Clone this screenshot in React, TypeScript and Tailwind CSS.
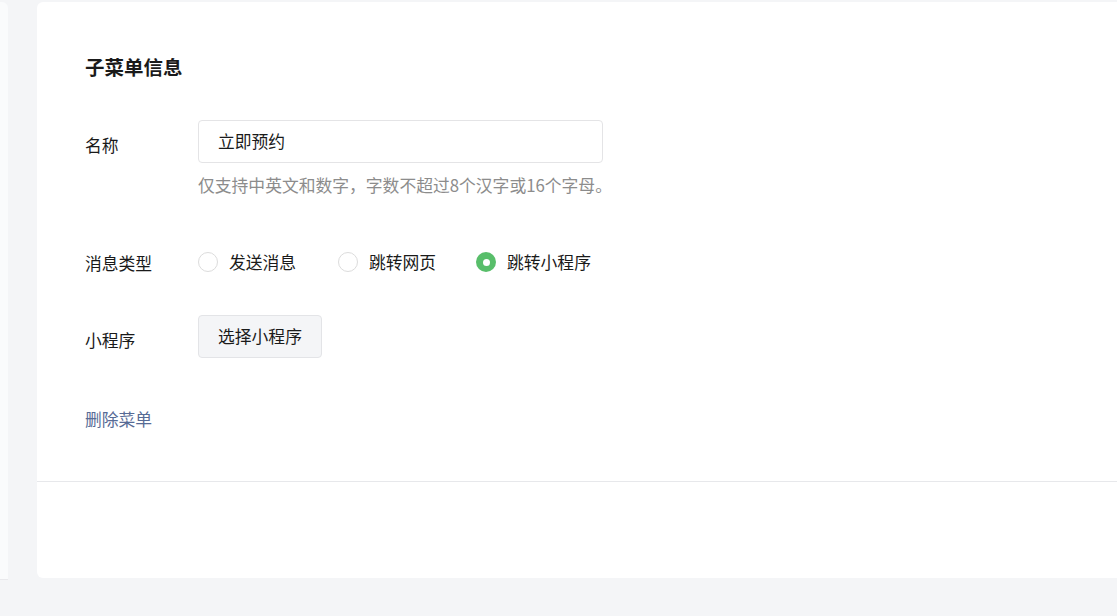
import React, { useState } from 'react';

const font = { fontFamily: '"Noto Sans CJK SC", "Liberation Sans", sans-serif' };

const Radio = ({ checked, label, onClick }: { checked: boolean; label: string; onClick: () => void }) => (
  <button onClick={onClick} className="flex items-center gap-[11px]">
    {checked ? (
      <span className="w-[20px] h-[20px] rounded-full bg-[#58be6a] flex items-center justify-center">
        <span className="w-[7px] h-[7px] rounded-full bg-white" />
      </span>
    ) : (
      <span className="w-[20px] h-[20px] rounded-full border border-[#dcdcdc] bg-white" />
    )}
    <span className="text-[16.8px] leading-[24px] text-[#1a1a1a]">{label}</span>
  </button>
);

export default function App() {
  const [type, setType] = useState('miniprogram');

  return (
    <div style={font} className="w-[1117px] h-[616px] overflow-hidden bg-[#f4f5f7] flex pt-[2px]">
      <div className="w-[8px] h-[578px] shrink-0 bg-[#fafbfc] rounded-tr-[6px] border-b border-[#e9e9ec]" />

      <div className="ml-[29px] w-[1110px] h-[576px] shrink-0 bg-white rounded-[6px] flex flex-col">
        <div className="h-[480px] shrink-0 border-b border-[#e7e8eb] pl-[48px] pt-[51px]">
          <h2 className="text-[19.5px] leading-[28px] font-bold text-[#1a1a1a]">子菜单信息</h2>

          {/* 名称 */}
          <div className="flex mt-[39px]">
            <div className="w-[113px] shrink-0 pt-[13px] text-[16.8px] leading-[24px] text-[#1a1a1a]">名称</div>
            <div>
              <div className="w-[405px] h-[43px] border border-[#e4e4e6] rounded-[4px] flex items-center pl-[19px] text-[16.8px] text-[#1a1a1a]">
                立即预约
              </div>
              <p className="mt-[10px] text-[16.8px] leading-[24px] text-[#8c8c8c]">
                仅支持中英文和数字，字数不超过8个汉字或16个字母。
              </p>
            </div>
          </div>

          {/* 消息类型 */}
          <div className="flex mt-[52px] items-center">
            <div className="w-[113px] shrink-0 pt-[2px] text-[16.8px] leading-[24px] text-[#1a1a1a]">消息类型</div>
            <div className="flex items-center">
              <div className="w-[140px]">
                <Radio checked={type === 'message'} label="发送消息" onClick={() => setType('message')} />
              </div>
              <div className="w-[138px]">
                <Radio checked={type === 'web'} label="跳转网页" onClick={() => setType('web')} />
              </div>
              <Radio checked={type === 'miniprogram'} label="跳转小程序" onClick={() => setType('miniprogram')} />
            </div>
          </div>

          {/* 小程序 */}
          <div className="flex mt-[40px]">
            <div className="w-[113px] shrink-0 pt-[13px] text-[16.8px] leading-[24px] text-[#1a1a1a]">小程序</div>
            <button className="h-[43px] px-[19px] bg-[#f4f5f7] border border-[#e3e4e7] rounded-[4px] text-[16.8px] text-[#1a1a1a]">
              选择小程序
            </button>
          </div>

          <button className="mt-[49px] block text-[16.8px] leading-[24px] text-[#576b95]">删除菜单</button>
        </div>
        <div className="flex-1" />
      </div>
    </div>
  );
}
